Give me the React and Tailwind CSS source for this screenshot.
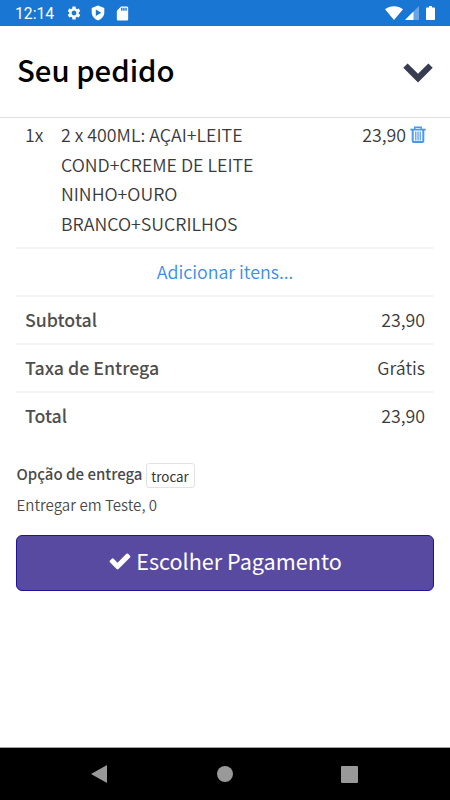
import React from 'react';
import { MdSettings, MdSdCard } from 'react-icons/md';

const ChevronDownIcon = () => (
  <svg className="mt-[3px] w-[30px] h-5" viewBox="0 0 30 20" fill="#373c50">
    <path d="M.3 4.7 4.6.4 15 10.8 25.4.4l4.3 4.3L15 19.4z" />
  </svg>
);

const TrashIcon = () => (
  <svg className="w-4 h-[17px]" viewBox="0 0 16 17" fill="none" stroke="#4a98ec">
    <path d="M.3 3.6h15.4" strokeWidth="1.8" />
    <path d="M4.8 3.2V1.2h6.4v2" strokeWidth="1.5" />
    <path d="M2.7 4v10.9q0 1 1 1h8.6q1 0 1-1V4" strokeWidth="2" />
    <path d="M5.8 5.5v9M8 5.5v9M10.2 5.5v9" strokeWidth="1.2" />
  </svg>
);

const CheckIcon = () => (
  <svg className="w-[24px] h-[24px]" viewBox="0 0 1792 1792" fill="#ffffff">
    <path d="M1671 566q0 40-28 68l-724 724-136 136q-28 28-68 28t-68-28l-136-136-362-362q-28-28-28-68t28-68l136-136q28-28 68-28t68 28l294 295 656-657q28-28 68-28t68 28l136 136q28 28 28 68z" />
  </svg>
);

const StatusBar = () => (
  <header className="flex h-[26px] shrink-0 items-center bg-[#1976d2] px-[15px] text-white">
    <span className="w-[51px] pt-0.5 font-['Roboto',sans-serif] text-[15.7px] leading-[24px]">12:14</span>
    <MdSettings className="h-4 w-4" />
    <svg className="ml-[9px] h-4 w-[14px]" viewBox="0 0 14 16">
      <path d="M7 .5 13.3 3v4.6c0 3.6-2.7 6.7-6.3 7.9C3.4 14.3.7 11.2.7 7.6V3z" fill="#fff" />
      <path d="M4.8 4.5v6.4l5.4-3.2z" fill="#1976d2" />
    </svg>
    <MdSdCard className="ml-[9px] h-[17px] w-[17px]" />
    <svg className="ml-auto h-[14px] w-[18px]" viewBox="0 0 18 14" fill="#fff">
      <path d="M9 14 0 3.3C2.5 1.3 5.6.2 9 .2s6.5 1.1 9 3.1z" />
    </svg>
    <svg className="ml-[2px] h-[14px] w-[14px]" viewBox="0 0 14 14" fill="#fff">
      <path d="M14 0v14H0z" fillOpacity=".35" />
      <path d="M8.5 5.5V14H0z" />
    </svg>
    <svg className="ml-[7px] h-[14px] w-[9px]" viewBox="0 0 9 14" fill="#fff">
      <path d="M3 0h3v1.4h2.3q.7 0 .7.7v11.2q0 .7-.7.7H.7q-.7 0-.7-.7V2.1q0-.7.7-.7H3z" />
    </svg>
  </header>
);

const SummaryRow = ({ label, value }) => (
  <div className="flex h-12 items-center justify-between border-t-2 border-[#f4f4f4] px-[9px] pb-0.5">
    <span className="font-medium text-[#4f4f4f]">{label}</span>
    <span className="font-[350]">{value}</span>
  </div>
);

const totals = [
  { label: 'Subtotal', value: '23,90' },
  { label: 'Taxa de Entrega', value: 'Grátis' },
  { label: 'Total', value: '23,90' },
];

const App = () => (
  <div className="flex h-[800px] w-[450px] flex-col overflow-hidden bg-white font-['Noto_Sans_CJK_SC',sans-serif] text-[17.8px] text-[#3a3a3a]">
    <StatusBar />
    <div className="flex h-[92px] shrink-0 items-center justify-between border-b border-[#dedede] px-[17px]">
      <h1 className="pb-[5px] text-[29.3px] font-medium leading-[44px] text-black">Seu pedido</h1>
      <ChevronDownIcon />
    </div>
    <main className="flex-1 px-4">
      <section className="flex h-[129px] items-start px-[9px] pt-[2px] font-[350] leading-[29.6px]">
        <span className="w-9">1x</span>
        <p className="w-[210px]">2 x 400ML: AÇAI+LEITE COND+CREME DE LEITE NINHO+OURO BRANCO+SUCRILHOS</p>
        <span className="-mr-px ml-auto flex items-center gap-1">
          23,90
          <TrashIcon />
        </span>
      </section>
      <div className="flex h-12 items-center justify-center border-t-2 border-[#f4f4f4] pb-0.5 font-[350] text-[#3b8ee8]">
        Adicionar itens...
      </div>
      {totals.map((row) => (
        <SummaryRow key={row.label} {...row} />
      ))}
      <section className="mt-[24px] pl-[0.5px] text-[15px] text-[#4a4a4a]">
        <div className="flex items-center gap-[3px]">
          <span className="-mt-[3px] font-medium">Opção de entrega</span>
          <button className="h-[25px] w-[49px] rounded-[3px] border border-[#e2e2e2] text-[13.4px] leading-[22px] text-[#333333]">
            trocar
          </button>
        </div>
        <p className="mt-[4px] text-[15.1px] font-[350] leading-[24px]">Entregar em Teste, 0</p>
      </section>
      <button className="mt-[19px] flex h-14 w-full items-center justify-center gap-1 rounded-[6px] border border-[#22129a] bg-[#574aa0] pb-1 text-[21.6px] leading-[30px] text-white">
        <CheckIcon />
        Escolher Pagamento
      </button>
    </main>
    <nav className="flex h-[53px] shrink-0 items-center border-t border-[#a0a0a0] bg-black">
      <svg className="ml-[91px] h-[18px] w-4" viewBox="0 0 16 18" fill="#999">
        <path d="M0 9 16 0v18z" />
      </svg>
      <span className="ml-[110px] h-4 w-4 rounded-full bg-[#999]" />
      <span className="ml-[108px] h-[17px] w-[17px] rounded-[1px] bg-[#999]" />
    </nav>
  </div>
);

export default App;
